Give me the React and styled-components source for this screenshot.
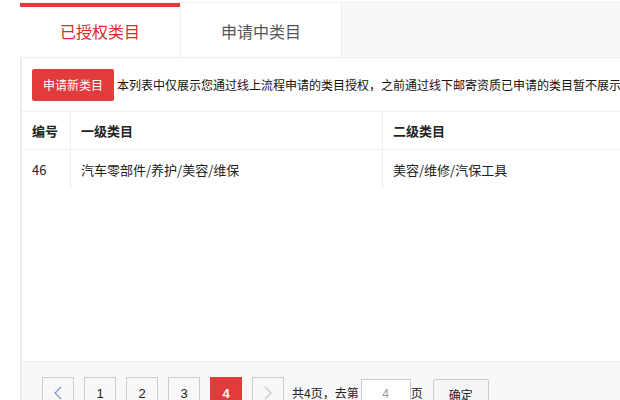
import React from "react";
import styled, { createGlobalStyle } from "styled-components";

const GlobalStyle = createGlobalStyle`
  html, body {
    margin: 0;
    padding: 0;
    background: #fff;
    overflow: hidden;
    font-family: "Noto Sans CJK SC", "Noto Sans", sans-serif;
    color: #333;
  }
`;

const Page = styled.div`
  width: 620px;
  height: 400px;
  padding: 2px 0 0 20px;
  box-sizing: border-box;
  overflow: hidden;
`;

const Panel = styled.div`
  width: 780px;
  display: flex;
  flex-direction: column;
  border-left: 2px solid #ececec;
  box-sizing: border-box;
`;

const TabBar = styled.div`
  display: flex;
  height: 56px;
  background: #f8f8f8;
  border-top: 1px solid #eee;
  border-bottom: 1px solid #eee;
  box-sizing: border-box;
`;

const Tab = styled.div`
  width: 161px;
  box-sizing: border-box;
  display: flex;
  align-items: center;
  justify-content: center;
  background: #fff;
  border-right: 1px solid #eee;
  font-size: 16px;
  color: ${(p) => (p.$active ? "#e2262b" : "#555")};
  box-shadow: ${(p) => (p.$active ? "inset 0 4px 0 #e23b3b" : "none")};
  margin-left: ${(p) => (p.$active ? "-2px" : "0")};
  padding-top: 2px;
`;

const Toolbar = styled.div`
  display: flex;
  align-items: center;
  height: 54px;
  padding: 0 10px;
  border-bottom: 1px solid #eee;
  box-sizing: border-box;
`;

const ApplyButton = styled.button`
  width: 82px;
  height: 32px;
  border: none;
  border-radius: 2px;
  background: #e23b3b;
  color: #fff;
  font-family: inherit;
  font-size: 12px;
  padding: 0;
  flex-shrink: 0;
`;

const Notice = styled.span`
  margin-left: 3px;
  font-size: 12px;
  color: #111;
  white-space: nowrap;
`;

const Row = styled.div`
  display: grid;
  grid-template-columns: 49px 312px 1fr;
  height: ${(p) => p.$h}px;
  border-bottom: ${(p) => (p.$line ? "1px solid #eee" : "none")};
  box-sizing: border-box;
`;

const Cell = styled.div`
  display: flex;
  align-items: center;
  padding-left: 10px;
  font-size: 13px;
  font-weight: ${(p) => (p.$head ? 700 : 400)};
  color: #222;
  border-right: 1px solid #eee;
  &:last-child {
    border-right: none;
  }
`;

const Spacer = styled.div`
  height: 172px;
`;

const Footer = styled.div`
  display: flex;
  align-items: flex-start;
  height: 60px;
  padding: 15px 0 0 20px;
  background: #f8f8f8;
  border-top: 1px solid #eee;
`;

const PageBtn = styled.div`
  width: 32px;
  height: 32px;
  margin-right: 10px;
  box-sizing: border-box;
  display: flex;
  align-items: center;
  justify-content: center;
  border: 1px solid ${(p) => (p.$active ? "#e23b3b" : "#ccc")};
  background: ${(p) => (p.$active ? "#e23b3b" : "#f8f8f8")};
  color: ${(p) => (p.$active ? "#fff" : "#222")};
  font-weight: ${(p) => (p.$active ? 700 : 400)};
  font-size: 13px;
  font-family: "Liberation Sans", sans-serif;
`;

const Label = styled.span`
  font-size: 12px;
  color: #222;
  line-height: 32px;
  margin-left: -2px;
`;

const PageInput = styled.div`
  width: 50px;
  height: 30px;
  margin: 2px 2px 0 2px;
  box-sizing: border-box;
  border: 1px solid #ccc;
  background: #fff;
  color: #999;
  font-size: 12px;
  display: flex;
  align-items: center;
  justify-content: center;
  font-family: "Liberation Sans", sans-serif;
`;

const Confirm = styled.div`
  width: 56px;
  height: 30px;
  margin: 2px 0 0 10px;
  box-sizing: border-box;
  border: 1px solid #ccc;
  border-radius: 2px;
  background: #f5f5f5;
  font-size: 12px;
  color: #222;
  display: flex;
  align-items: center;
  justify-content: center;
`;

const Chevron = ({ dir, color }) => (
  <svg width="8" height="14" viewBox="0 0 8 14" fill="none">
    <path
      d={dir === "left" ? "M7 1L1 7l6 6" : "M1 1l6 6-6 6"}
      stroke={color}
      strokeWidth="1.2"
    />
  </svg>
);

export default function App() {
  return (
    <>
      <GlobalStyle />
      <Page>
        <Panel>
          <TabBar>
            <Tab $active>已授权类目</Tab>
            <Tab>申请中类目</Tab>
          </TabBar>
          <Toolbar>
            <ApplyButton>申请新类目</ApplyButton>
            <Notice>
              本列表中仅展示您通过线上流程申请的类目授权，之前通过线下邮寄资质已申请的类目暂不展示。
            </Notice>
          </Toolbar>
          <Row $h={38} $line>
            <Cell $head>编号</Cell>
            <Cell $head>一级类目</Cell>
            <Cell $head>二级类目</Cell>
          </Row>
          <Row $h={39}>
            <Cell>46</Cell>
            <Cell>汽车零部件/养护/美容/维保</Cell>
            <Cell>美容/维修/汽保工具</Cell>
          </Row>
          <Spacer />
          <Footer>
            <PageBtn>
              <Chevron dir="left" color="#7a9ccc" />
            </PageBtn>
            <PageBtn>1</PageBtn>
            <PageBtn>2</PageBtn>
            <PageBtn>3</PageBtn>
            <PageBtn $active>4</PageBtn>
            <PageBtn>
              <Chevron dir="right" color="#c8c8c8" />
            </PageBtn>
            <Label>共4页，去第</Label>
            <PageInput>4</PageInput>
            <Label>页</Label>
            <Confirm>确定</Confirm>
          </Footer>
        </Panel>
      </Page>
    </>
  );
}
